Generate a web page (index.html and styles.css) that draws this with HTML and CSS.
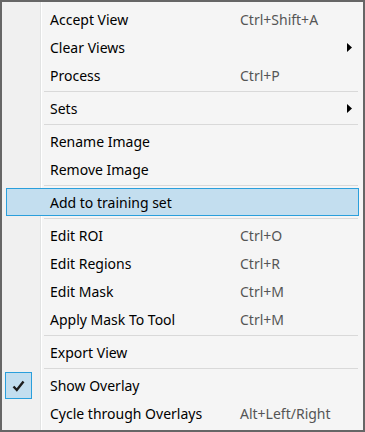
FILE: index.html
```html
<!DOCTYPE html>
<html lang="en">
<head>
    <meta charset="UTF-8">
    <meta name="viewport" content="width=device-width, initial-scale=1.0">
    <title>Context Menu</title>
    <link rel="stylesheet" href="styles.css">
</head>
<body>
    <div class="menu">
        <div class="item"><span class="gutter"></span><span class="label">Accept View</span><span class="key">Ctrl+Shift+A</span></div>
        <div class="item"><span class="gutter"></span><span class="label">Clear Views</span><span class="key"></span>
            <svg class="arrow" width="5" height="9" viewBox="0 0 5 9"><polygon points="0,0 5,4.5 0,9" fill="#000"/></svg>
        </div>
        <div class="item"><span class="gutter"></span><span class="label">Process</span><span class="key">Ctrl+P</span></div>
        <div class="sep"></div>
        <div class="item"><span class="gutter"></span><span class="label">Sets</span><span class="key"></span>
            <svg class="arrow" width="5" height="9" viewBox="0 0 5 9"><polygon points="0,0 5,4.5 0,9" fill="#000"/></svg>
        </div>
        <div class="sep"></div>
        <div class="item"><span class="gutter"></span><span class="label">Rename Image</span><span class="key"></span></div>
        <div class="item"><span class="gutter"></span><span class="label">Remove Image</span><span class="key"></span></div>
        <div class="sep"></div>
        <div class="item active"><span class="gutter"></span><span class="label">Add to training set</span><span class="key"></span></div>
        <div class="sep"></div>
        <div class="item"><span class="gutter"></span><span class="label">Edit ROI</span><span class="key">Ctrl+O</span></div>
        <div class="item"><span class="gutter"></span><span class="label">Edit Regions</span><span class="key">Ctrl+R</span></div>
        <div class="item"><span class="gutter"></span><span class="label">Edit Mask</span><span class="key">Ctrl+M</span></div>
        <div class="item"><span class="gutter"></span><span class="label">Apply Mask To Tool</span><span class="key">Ctrl+M</span></div>
        <div class="sep"></div>
        <div class="item"><span class="gutter"></span><span class="label">Export View</span><span class="key"></span></div>
        <div class="sep"></div>
        <div class="item">
            <span class="gutter">
                <span class="check">
                    <svg width="13" height="12" viewBox="0 0 13 12"><path d="M1.5 6.5 L4.8 10 L11.5 1.5" fill="none" stroke="#1e1e1e" stroke-width="2.4"/></svg>
                </span>
            </span>
            <span class="label">Show Overlay</span><span class="key"></span>
        </div>
        <div class="item"><span class="gutter"></span><span class="label">Cycle through Overlays</span><span class="key">Alt+Left/Right</span></div>
    </div>
</body>
</html>
```

FILE: styles.css
```css
body {
    margin: 0;
    padding: 0;
    font-family: "Noto Sans", "Open Sans", sans-serif;
    font-size: 14px;
    color: #000;
}
.menu {
    width: 365px;
    height: 432px;
    box-sizing: border-box;
    border: 2px solid #666;
    padding: 3px 0;
    background: linear-gradient(to right, #f0f0f0 38px, #e2e3e3 38px 39px, #ffffff 39px 40px, #f5f5f5 40px);
}
.item {
    display: flex;
    align-items: center;
    height: 28px;
    margin: 0 4px;
    box-sizing: border-box;
}
.item.active {
    background: #c3deef;
    border: 1px solid #2a9fdc;
    margin: 0 4px;
}
.item.active .gutter {
    width: 43px;
}
.gutter {
    width: 44px;
    height: 28px;
    flex-shrink: 0;
    display: flex;
    align-items: center;
}
.label {
    width: 190px;
    flex-shrink: 0;
    white-space: nowrap;
}
.key {
    flex: 1;
    color: #555;
    white-space: nowrap;
}
.arrow {
    margin-right: 7px;
}
.check {
    width: 27px;
    height: 27px;
    box-sizing: border-box;
    margin-left: -1px;
    margin-top: 1px;
    border: 1px solid #2a9fdc;
    background: #c3deef;
    display: flex;
    align-items: center;
    justify-content: center;
}
.sep {
    margin: 2px 5px 2px 42px;
    border-top: 1px solid #d9d9d9;
}
```
